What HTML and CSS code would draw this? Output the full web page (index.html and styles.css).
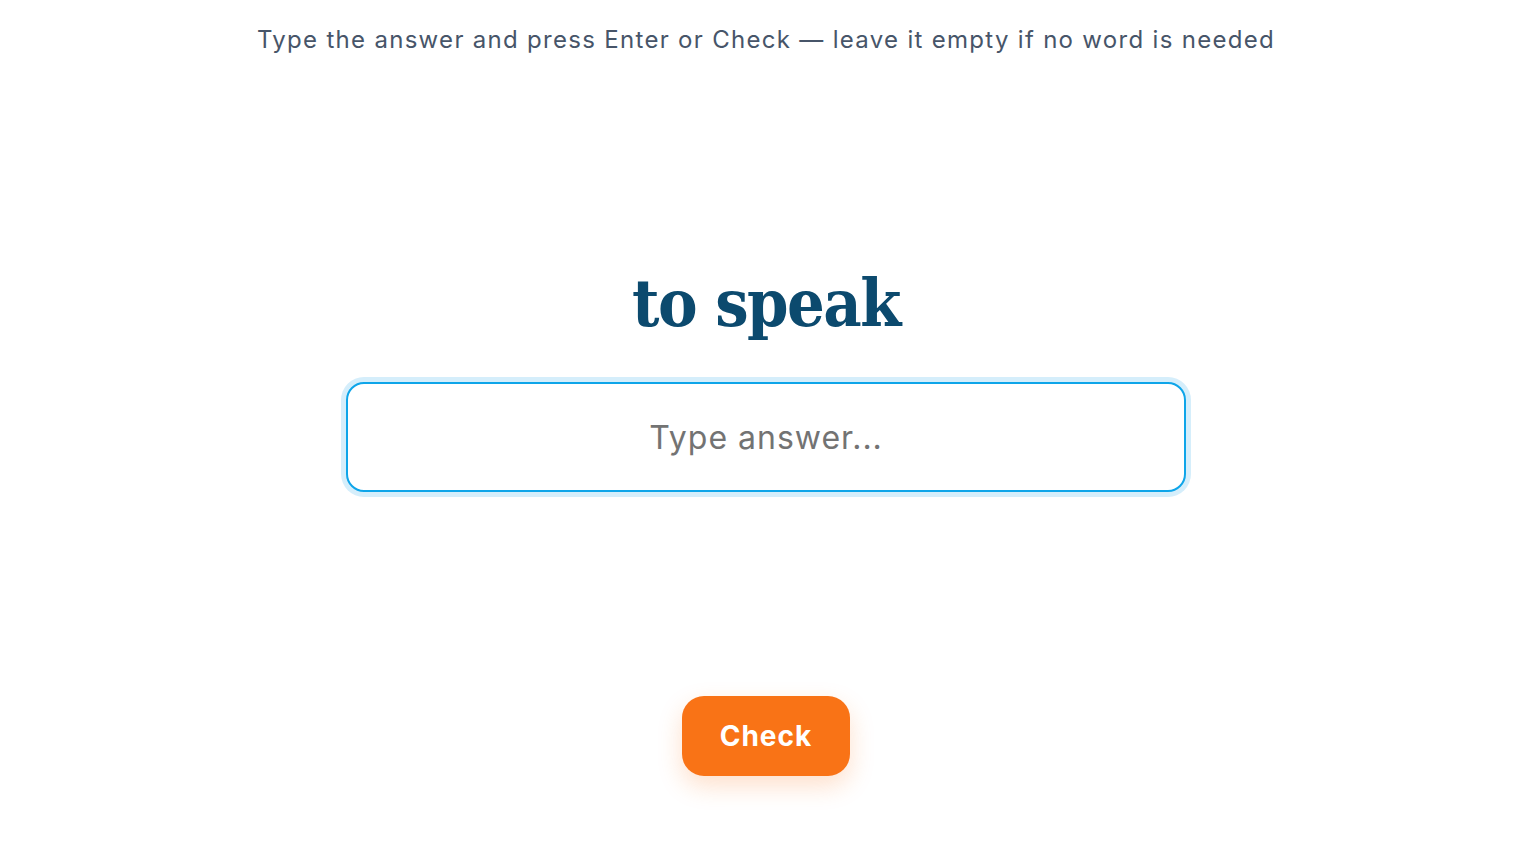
FILE: index.html
```html
<!DOCTYPE html>
<html lang="en">
<head>
<meta charset="utf-8">
<title>Type the answer</title>
<link rel="stylesheet" href="styles.css">
</head>
<body>
<main class="page">
  <p class="hint">Type the answer and press Enter or Check — leave it empty if no word is needed</p>
  <section class="prompt">
    <h1 class="word">to speak</h1>
    <input class="answer" type="text" placeholder="Type answer..." aria-label="Answer">
  </section>
  <button class="check" type="button">Check</button>
</main>
</body>
</html>
```

FILE: styles.css
```css
html, body {
  margin: 0;
  padding: 0;
  background: #ffffff;
}
body {
  font-family: Inter, "Open Sans", sans-serif;
}
.page {
  width: 1532px;
  height: 848px;
  display: flex;
  flex-direction: column;
  align-items: center;
  box-sizing: border-box;
}
.hint {
  margin: 24px 0 0 0;
  font-size: 24px;
  line-height: 32px;
  color: #475569;
  font-weight: 400;
  letter-spacing: 1.3px;
}
.prompt {
  display: flex;
  flex-direction: column;
  align-items: center;
  margin-top: 206px;
}
.word {
  margin: 0;
  font-family: "DejaVu Serif Condensed", "DejaVu Serif", serif;
  font-weight: 700;
  font-size: 66px;
  line-height: 80px;
  color: #0c4a6e;
  letter-spacing: -1.5px;
  position: relative;
  top: 1px;
}
.answer {
  margin-top: 40px;
  width: 840px;
  height: 110px;
  box-sizing: border-box;
  border: 2px solid #0ea5e9;
  border-radius: 18px;
  box-shadow: 0 0 0 5px #d5eefb;
  outline: none;
  text-align: center;
  font-family: Inter, "Open Sans", sans-serif;
  font-size: 32px;
  letter-spacing: 1px;
  color: #334155;
  background: #fff;
}
.answer::placeholder {
  color: #737373;
  opacity: 1;
}
.check {
  margin-top: 204px;
  width: 168px;
  height: 80px;
  border: none;
  border-radius: 22px;
  background: #f97316;
  color: #fff;
  font-family: Inter, "Open Sans", sans-serif;
  font-weight: 700;
  font-size: 28px;
  letter-spacing: 1px;
  box-shadow: 0 10px 24px rgba(249, 115, 22, 0.22);
  cursor: pointer;
}
```
